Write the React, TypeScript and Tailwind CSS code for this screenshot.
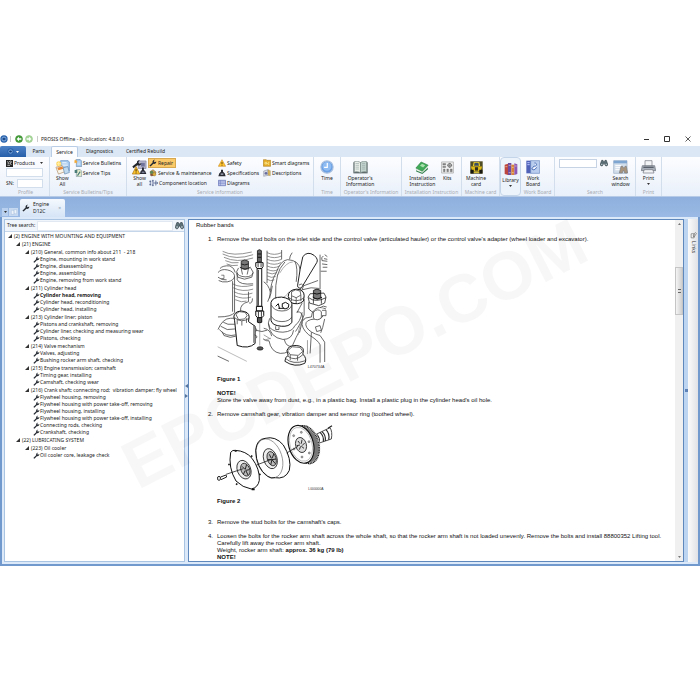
import React from 'react';

interface IconProps {
  className?: string;
}

interface TreeNode {
  level: number;
  label: string;
  leaf?: boolean;
  active?: boolean;
}

const treeNodes: TreeNode[] = [
  { level: 0, label: '(2) ENGINE WITH MOUNTING AND EQUIPMENT' },
  { level: 1, label: '(21) ENGINE' },
  { level: 2, label: '(210) General, common info about 211  - 218' },
  { level: 3, label: 'Engine, mounting in work stand', leaf: true },
  { level: 3, label: 'Engine, disassembling', leaf: true },
  { level: 3, label: 'Engine, assembling', leaf: true },
  { level: 3, label: 'Engine, removing from work stand', leaf: true },
  { level: 2, label: '(211) Cylinder head' },
  { level: 3, label: 'Cylinder head, removing', leaf: true, active: true },
  { level: 3, label: 'Cylinder head, reconditioning', leaf: true },
  { level: 3, label: 'Cylinder head, installing', leaf: true },
  { level: 2, label: '(213) Cylinder liner; piston' },
  { level: 3, label: 'Pistons and crankshaft, removing', leaf: true },
  { level: 3, label: 'Cylinder liner, checking and measuring wear', leaf: true },
  { level: 3, label: 'Pistons, checking', leaf: true },
  { level: 2, label: '(214) Valve mechanism' },
  { level: 3, label: 'Valves, adjusting', leaf: true },
  { level: 3, label: 'Bushing rocker arm shaft, checking', leaf: true },
  { level: 2, label: '(215) Engine transmission; camshaft' },
  { level: 3, label: 'Timing gear, installing', leaf: true },
  { level: 3, label: 'Camshaft, checking wear', leaf: true },
  { level: 2, label: '(216) Crank shaft; connecting rod;  vibration damper; fly wheel' },
  { level: 3, label: 'Flywheel housing, removing', leaf: true },
  { level: 3, label: 'Flywheel housing with power take-off, removing', leaf: true },
  { level: 3, label: 'Flywheel housing, installing', leaf: true },
  { level: 3, label: 'Flywheel housing with power take-off, installing', leaf: true },
  { level: 3, label: 'Connecting rods, checking', leaf: true },
  { level: 3, label: 'Crankshaft, checking', leaf: true },
  { level: 1, label: '(22) LUBRICATING SYSTEM' },
  { level: 2, label: '(223) Oil cooler' },
  { level: 3, label: 'Oil cooler core, leakage check', leaf: true },
];

const indents = ['pl-[3px]', 'pl-[11px]', 'pl-[20px]', 'pl-[28px]'];

/* ---------- icons ---------- */

function WrenchIcon({ className = 'size-[7px]' }: IconProps) {
  return (
    <svg viewBox="0 0 20 20" className={`${className} shrink-0`} aria-hidden="true">
      <path d="M1 17 L9 9 C8 5 11 1 15 2 L12 5 L14 8 L18 6 C19 10 15 13 11 12 L4 19 Z" fill="#262b33" />
    </svg>
  );
}

function BinocularsIcon({ className = 'size-[8px]' }: IconProps) {
  return (
    <svg viewBox="0 0 24 24" className={`${className} shrink-0`} aria-hidden="true">
      <path d="M5 4h4l2 4h2l2-4h4l4 11a4 4 0 0 1-8 3l-2-5h-2l-2 5a4 4 0 0 1-8-3Z" fill="#5c7078" stroke="#27343b" strokeWidth="1.5" />
      <circle cx="5.5" cy="16" r="2" fill="#dbe7ea" />
      <circle cx="18.5" cy="16" r="2" fill="#dbe7ea" />
    </svg>
  );
}

function LogoIcon({ className = 'size-[8px]' }: IconProps) {
  return (
    <svg viewBox="0 0 24 24" className={`${className} shrink-0`} aria-hidden="true">
      <circle cx="12" cy="12" r="11" fill="#2a63ad" />
      <circle cx="12" cy="12" r="6" fill="none" stroke="#a8c9ee" strokeWidth="2" />
      <path d="M8 12h8" stroke="#173f7c" strokeWidth="4" />
    </svg>
  );
}

function ArrowCircle({ className = 'size-[8px]', flip }: IconProps & { flip?: boolean }) {
  return (
    <svg viewBox="0 0 24 24" className={`${className} shrink-0`} aria-hidden="true">
      <circle cx="12" cy="12" r="10.5" fill={flip ? '#a9d99c' : '#47a33a'} stroke={flip ? '#8cc081' : '#2c7b25'} strokeWidth="1.5" />
      <path d={flip ? 'M5 10h7V5l7 7-7 7v-5H5Z' : 'M19 10h-7V5l-7 7 7 7v-5h7Z'} fill="#fff" />
    </svg>
  );
}

function ProductsIcon() {
  return (
    <svg viewBox="0 0 21 21" className="size-[7px] shrink-0" aria-hidden="true">
      <path d="M0 0h21v21H0Z" fill="#252525" />
      <path d="M3 5l5 2 5-4 4 3-5 3 4 6M4 16h8M5 11h5" stroke="#fff" strokeWidth="2" fill="none" />
    </svg>
  );
}

function BulletinsIcon({ className = 'size-[15px]' }: IconProps) {
  return (
    <svg viewBox="0 0 48 48" className={`${className} shrink-0`} aria-hidden="true">
      <path d="M18 2h24l4 5v28H18Z" fill="#a8cbef" stroke="#5688bf" strokeWidth="2" />
      <path d="M23 8h14M23 13h18M23 18h18" stroke="#fff" strokeWidth="2" />
      <path d="M3 23l20-5 10 19-22 8Z" fill="#f9f4e8" stroke="#a9845b" strokeWidth="2" />
      <path d="M7 25l16-4 4 7-16 5Z" fill="#e98937" />
      <path d="M26 25l15-4 5 19-15 5Z" fill="#bfd9ee" stroke="#5d83a8" strokeWidth="2" />
      <circle cx="12" cy="12" r="8" fill="#ffd65a" />
      <path d="M12 5v14M5 12h14" stroke="#fff0b1" strokeWidth="3" />
    </svg>
  );
}

function PageIcon({ tip }: { tip?: boolean }) {
  return (
    <svg viewBox="0 0 24 24" className="size-[8px] shrink-0" aria-hidden="true">
      <path d="M7 1h11l5 5v17H7Z" fill={tip ? '#e0e8c4' : '#9fc5ed'} stroke="#637e99" strokeWidth="1.5" />
      <path d="M10 9h9M10 13h9M10 17h9" stroke="#fff" strokeWidth="1.5" />
      {tip ? (
        <path d="M2 3h8v9H2Zm7 16l8-12 3 2-8 12Z" fill="#4c7d78" />
      ) : (
        <path d="M5 1l2 4 4 1-3 3 1 5-4-3-4 2 1-5-2-3 4-1Z" fill="#f4a936" />
      )}
    </svg>
  );
}

function ShowAllIcon() {
  return (
    <svg viewBox="0 0 48 48" className="size-[15px] shrink-0" aria-hidden="true">
      <path d="M20 3h25v24H20Z" fill="#b9b8cd" stroke="#77779d" strokeWidth="2" />
      <path d="M29 9h12v12H29Z" fill="#71739c" />
      <path d="M1 21l15-12c-1-6 3-9 9-8l-5 6 3 5 7-2c-1 7-7 9-13 7L5 26Z" fill="#20242b" />
      <path d="M13 21l12 24H1Z" fill="#fbc42e" stroke="#a66b09" strokeWidth="2" />
      <path d="M13 29v8m0 3v3" stroke="#322100" strokeWidth="3" />
      <path d="M32 24h6v8l4 3 4 10H25l3-10 4-3Z" fill="#262733" />
      <path d="M31 37h9v5h-9Z" fill="#787e96" />
    </svg>
  );
}

function MaintenanceIcon() {
  return (
    <svg viewBox="0 0 24 24" className="size-[8px] shrink-0" aria-hidden="true">
      <path d="M3 8l9-6 9 7-3 9-12 3Z" fill="#caa154" stroke="#735d38" strokeWidth="1.5" />
      <circle cx="8" cy="10" r="5" fill="#5c8658" />
      <circle cx="16" cy="16" r="5" fill="#ddb13f" stroke="#775c18" />
      <path d="M2 18l8-4 2 7Z" fill="#7b3f37" />
    </svg>
  );
}

function ComponentIcon() {
  return (
    <svg viewBox="0 0 28 24" className="h-[8px] w-[9px] shrink-0" aria-hidden="true">
      <path d="M4 4v16M1 7h6M1 17h6M12 2v20M9 5h6M9 19h6M21 4v16M14 12h13M24 8l3 4-3 4" stroke="#394b7b" strokeWidth="2" fill="none" />
      <circle cx="12" cy="12" r="3" fill="#d7d9ea" stroke="#394b7b" />
    </svg>
  );
}

function SafetyIcon() {
  return (
    <svg viewBox="0 0 24 24" className="size-[8px] shrink-0" aria-hidden="true">
      <path d="M12 2l11 20H1Z" fill="#ffc52f" stroke="#c27a0c" strokeWidth="1.5" />
      <path d="M12 9v7m0 2v2" stroke="#3c2500" strokeWidth="2.4" />
    </svg>
  );
}

function SpecIcon() {
  return (
    <svg viewBox="0 0 24 24" className="size-[8px] shrink-0" aria-hidden="true">
      <path d="M9 2h6v6l5 5 3 9H1l3-9 5-5Z" fill="#292c33" />
      <path d="M8 13h8v5H8Z" fill="#8d93a0" />
    </svg>
  );
}

function DiagramIcon() {
  return (
    <svg viewBox="0 0 24 24" className="size-[8px] shrink-0" aria-hidden="true">
      <path d="M1 4h22v16H1Z" fill="#c5cdf0" stroke="#5665ae" strokeWidth="2" />
      <path d="M1 9h22M1 14h22M7 4v16" stroke="#6474bb" strokeWidth="1.5" />
    </svg>
  );
}

function SmartIcon() {
  return (
    <svg viewBox="0 0 24 24" className="size-[8px] shrink-0" aria-hidden="true">
      <path d="M1 2h9l2 2h11v18H1Z" fill="#e5ad28" stroke="#9c6f11" strokeWidth="1.5" />
      <path d="M6 10h5v5H6Zm9 0h4M11 14h6v4" stroke="#fff1a5" strokeWidth="2" fill="none" />
    </svg>
  );
}

function DescriptionsIcon() {
  return (
    <svg viewBox="0 0 24 24" className="size-[8px] shrink-0" aria-hidden="true">
      <path d="M2 6l13-4v17L2 22Z" fill="#d4d6df" stroke="#858a9b" strokeWidth="1.5" />
      <path d="M15 2l7 3v15l-7-1Z" fill="#d9b65e" stroke="#8c7b50" />
      <circle cx="9" cy="13" r="4" fill="#676ca0" />
    </svg>
  );
}

function ClockIcon() {
  return (
    <svg viewBox="0 0 48 48" className="size-[14px] shrink-0" aria-hidden="true">
      <circle cx="24" cy="24" r="21" fill="#6ba0e4" stroke="#a8bfdf" strokeWidth="4" />
      <circle cx="24" cy="22" r="15" fill="#8fbdf3" />
      <path d="M25 10v15H14" stroke="#fff" strokeWidth="4" fill="none" />
    </svg>
  );
}

function BookIcon() {
  return (
    <svg viewBox="0 0 48 42" className="h-[13px] w-[15px] shrink-0" aria-hidden="true">
      <path d="M1 4h46v36H1Z" fill="#5d6869" />
      <path d="M4 2c8-2 15-1 20 3v33c-6-4-13-4-20-2Z" fill="#e9eee9" stroke="#778583" strokeWidth="2" />
      <path d="M44 2c-8-2-15-1-20 3v33c6-4 13-4 20-2Z" fill="#c3d3ce" stroke="#778583" strokeWidth="2" />
      <path d="M8 8h11M8 14h11M8 20h11M8 26h11M29 8h10M29 14h10M29 20h10M29 26h10" stroke="#96a5a2" strokeWidth="2" />
    </svg>
  );
}

function GreenBookIcon() {
  return (
    <svg viewBox="0 0 48 44" className="h-[13px] w-[14px] shrink-0" aria-hidden="true">
      <path d="M4 29l20 9 20-17v8L25 44 4 36Z" fill="#398355" />
      <path d="M5 27l19 9 20-18v4L25 40 5 32Z" fill="#edf4e8" />
      <path d="M3 24L21 3l24 11-20 21Z" fill="#3fab58" stroke="#287a3d" strokeWidth="2" />
      <path d="M17 16l7-7 11 5-7 8Z" fill="#a9dfac" />
    </svg>
  );
}

function KitsIcon() {
  return (
    <svg viewBox="0 0 42 42" className="size-[13px] shrink-0" aria-hidden="true">
      <path d="M2 3h38v36H2Z" fill="#f1f1f1" stroke="#999" strokeWidth="2" />
      <path d="M6 8h9v5H6Zm0 9h9v4H6Zm2 9h5v9H8Zm11 0h5v9h-5Zm11 0h6v9h-6Z" fill="#888" stroke="#555" />
      <circle cx="28" cy="14" r="6" fill="none" stroke="#666" strokeWidth="3" />
      <path d="M20 14h16M28 6v16" stroke="#666" strokeWidth="2" />
    </svg>
  );
}

function MachineIcon() {
  return (
    <svg viewBox="0 0 42 42" className="size-[13px] shrink-0" aria-hidden="true">
      <path d="M1 1h40v40H1Z" fill="#514d25" />
      <path d="M12 3h18l3 14H9Z" fill="#f1d022" />
      <path d="M15 6h12l2 9H13Z" fill="#3a4f66" />
      <path d="M3 18h36l-4 14H7Z" fill="#e0bb16" />
      <path d="M16 20h10v11H16Z" fill="#322f1d" />
      <path d="M2 28h10v12H2Zm28 0h10v12H30Z" fill="#17170f" />
      <path d="M12 34h18v4H12Z" fill="#f5db40" />
    </svg>
  );
}

function LibraryIcon() {
  return (
    <svg viewBox="0 0 42 42" className="size-[14px] shrink-0" aria-hidden="true">
      <path d="M2 8l10-3v34L2 36Z" fill="#bd473e" />
      <path d="M12 3h10v36H12Z" fill="#6e4aa1" />
      <path d="M22 8h9v31h-9Z" fill="#d78138" />
      <path d="M31 4l9 3v29l-9 3Z" fill="#8d58b3" />
      <path d="M4 14h6M14 10h6M24 16h5M33 12h5M14 32h6M24 32h5" stroke="#f4dba8" strokeWidth="2" />
    </svg>
  );
}

function WorkBoardIcon() {
  return (
    <svg viewBox="0 0 42 42" className="size-[14px] shrink-0" aria-hidden="true">
      <path d="M1 2h14v38H1Z" fill="#5061b8" />
      <path d="M14 2h27v38H14Z" fill="#b9cdee" stroke="#6886c0" strokeWidth="2" />
      <path d="M4 8h7M4 14h7" stroke="#b9c6ff" strokeWidth="3" />
      <path d="M25 9a5 5 0 1 1-1 9l-7 9 7 3 9-8" stroke="#5576b9" strokeWidth="3" fill="#eef3ff" />
    </svg>
  );
}

function SearchWindowIcon() {
  return (
    <svg viewBox="0 0 45 45" className="size-[15px] shrink-0" aria-hidden="true">
      <path d="M2 2h40v38H2Z" fill="#d3deeb" stroke="#9aaec4" strokeWidth="2" />
      <path d="M2 2h40v8H2Z" fill="#7fa5d1" />
      <path d="M7 17h18M7 23h16M7 29h18" stroke="#fff" strokeWidth="3" />
      <path d="M24 19h5l2 4h3l2-4h4l4 20h-9l-2-7h-3l-2 7h-9Z" fill="#a8937d" stroke="#7b7f83" strokeWidth="2" />
    </svg>
  );
}

function PrinterIcon() {
  return (
    <svg viewBox="0 0 45 42" className="h-[14px] w-[15px] shrink-0" aria-hidden="true">
      <path d="M12 2h21v17H12Z" fill="#f3f4f6" stroke="#70747b" strokeWidth="2" />
      <path d="M4 17h37l3 15H1Z" fill="#a9afb8" stroke="#666c76" strokeWidth="2" />
      <path d="M7 20h31v4H7Z" fill="#5a606b" />
      <path d="M10 29h25l4 10H6Z" fill="#f3f4f6" stroke="#70747b" strokeWidth="2" />
    </svg>
  );
}

/* ---------- ribbon ---------- */

function RibbonGroup({ title, width, children }: { title: string; width: string; children: React.ReactNode }) {
  return (
    <section aria-label={title} className={`${width} flex shrink-0 flex-col border-r border-[#d3deec] pt-px`}>
      <div className="flex h-[30px] justify-center">{children}</div>
      <div className="flex justify-center whitespace-nowrap leading-[8px] text-[#a7abb2]">{title}</div>
    </section>
  );
}

function BigButton({ icon, label, caret }: { icon: React.ReactNode; label: string; caret?: boolean }) {
  return (
    <button type="button" className="flex flex-col items-center px-px pt-px">
      <span className="flex h-[16px] items-center">{icon}</span>
      <span className="whitespace-pre text-center leading-[6px]">{label}</span>
      {caret && <Caret />}
    </button>
  );
}

function SmallButton({ icon, label, active }: { icon: React.ReactNode; label: string; active?: boolean }) {
  return (
    <button
      type="button"
      className={`flex h-[10px] items-center gap-px whitespace-nowrap border ${
        active ? 'border-[#d8a851] bg-[#fbc968] pr-[2px]' : 'border-transparent'
      }`}
    >
      {icon}
      {label}
    </button>
  );
}

function Caret() {
  return (
    <svg viewBox="0 0 6 4" className="my-[2px] h-[2px] w-[3px]" aria-hidden="true">
      <path d="M0 0h6L3 4Z" fill="#333" />
    </svg>
  );
}

function Ribbon() {
  return (
    <div className="flex h-[40px] overflow-hidden border-b border-[#b5cae6] bg-linear-to-b from-[#fcfdff] to-[#e9f0fa] pl-[2px]">
      <RibbonGroup title="Profile" width="w-[48px]">
        <div className="flex w-full flex-col pl-[4px]">
          <button type="button" className="flex h-[10px] items-center gap-px">
            <ProductsIcon />
            Products
            <span className="ml-[4px]"><Caret /></span>
          </button>
          <input aria-label="Product" className="h-[9px] w-[37px] border border-[#d3deed] bg-white" />
          <label className="mt-[2px] flex items-center gap-[3px]">
            SN:
            <input className="h-[9px] w-[26px] border border-[#d3deed] bg-white" />
          </label>
        </div>
      </RibbonGroup>
      <RibbonGroup title="Service Bulletins/Tips" width="w-[77px]">
        <BigButton icon={<BulletinsIcon />} label={'Show\nAll'} />
        <div className="ml-[2px] flex flex-col">
          <SmallButton icon={<PageIcon />} label="Service Bulletins" />
          <SmallButton icon={<PageIcon tip />} label="Service Tips" />
        </div>
      </RibbonGroup>
      <RibbonGroup title="Service information" width="w-[187px]">
        <div className="flex w-full pl-[4px]">
          <BigButton icon={<ShowAllIcon />} label={'Show\nall'} />
          <div className="flex w-[69px] flex-col items-start">
            <SmallButton icon={<WrenchIcon className="size-[8px]" />} label="Repair" active />
            <SmallButton icon={<MaintenanceIcon />} label="Service & maintenance" />
            <SmallButton icon={<ComponentIcon />} label="Component location" />
          </div>
          <div className="flex w-[45px] flex-col items-start">
            <SmallButton icon={<SafetyIcon />} label="Safety" />
            <SmallButton icon={<SpecIcon />} label="Specifications" />
            <SmallButton icon={<DiagramIcon />} label="Diagrams" />
          </div>
          <div className="flex flex-col items-start">
            <SmallButton icon={<SmartIcon />} label="Smart diagrams" />
            <SmallButton icon={<DescriptionsIcon />} label="Descriptions" />
          </div>
        </div>
      </RibbonGroup>
      <RibbonGroup title="Time" width="w-[27px]">
        <BigButton icon={<ClockIcon />} label="Time" />
      </RibbonGroup>
      <RibbonGroup title="Operator's Information" width="w-[61px]">
        <div className="flex w-full pl-[4px]">
          <BigButton icon={<BookIcon />} label={"Operator's\nInformation"} />
        </div>
      </RibbonGroup>
      <RibbonGroup title="Installation Instruction" width="w-[60px]">
        <div className="flex gap-[3px]">
          <BigButton icon={<GreenBookIcon />} label={'Installation\nInstruction'} />
          <BigButton icon={<KitsIcon />} label="Kits" />
        </div>
      </RibbonGroup>
      <RibbonGroup title="Machine card" width="w-[38px]">
        <div className="flex w-full pl-[3px]">
          <BigButton icon={<MachineIcon />} label={'Machine\ncard'} />
        </div>
      </RibbonGroup>
      <div className="w-[21px] shrink-0 rounded-sm border border-[#c5d5e9] bg-[#edf3fb]">
        <div className="flex justify-center pt-[2px]">
          <BigButton icon={<LibraryIcon />} label="Library" caret />
        </div>
      </div>
      <RibbonGroup title="Work Board" width="w-[34px]">
        <div className="flex w-full pl-[4px]">
          <BigButton icon={<WorkBoardIcon />} label={'Work\nBoard'} />
        </div>
      </RibbonGroup>
      <RibbonGroup title="Search" width="w-[81px]">
        <input aria-label="Search" className="mt-px h-[9px] w-[38px] border border-[#c6d3e5] bg-white" />
        <button type="button" aria-label="Find" className="ml-[3px] flex h-[10px] items-center">
          <BinocularsIcon />
        </button>
        <div className="ml-[2px]">
          <BigButton icon={<SearchWindowIcon />} label={'Search\nwindow'} />
        </div>
      </RibbonGroup>
      <RibbonGroup title="Print" width="w-[26px]">
        <BigButton icon={<PrinterIcon />} label="Print" caret />
      </RibbonGroup>
    </div>
  );
}

/* ---------- figures ---------- */

function StudBoltFigure() {
  return (
    <svg viewBox="95 102 335 360" className="h-[120px] w-[111px]" role="img" aria-label="Stud bolts and control valve">
      <g fill="none" stroke="#444" strokeWidth="2.4" strokeLinejoin="round">
        {/* springs */}
        <path d="M112 108q30 16 88 2M112 116q40 20 92 2M116 126q38 18 88 2M120 136q20 10 40 6M124 146q16 8 34 4M142 206q24 14 62 4M144 218q28 14 60 4M146 230q28 14 56 4M148 242q24 12 50 4M150 254q20 10 34 4" stroke="#777" />
        <path d="M246 112q22 10 44 0M246 122q22 10 44 0M246 132q22 10 44 0M246 142q22 10 42 0M246 152q20 10 38 0M246 162q20 10 34 0M246 172q16 8 30 0M246 182q14 8 26 2M246 192q10 8 22 2" stroke="#777" />
        <path d="M246 106v98M290 104v28M236 200q14 8 20 30" />
        {/* left cylinder */}
        <path d="M98 172q10-12 28-8q20 4 22 18q0 14-22 18q-16 2-26-4M98 186q12 10 26 8M148 184v108q-8 14-50 14M142 198v92M104 160q8-10 30-8q14 6 16 20" />
        <path d="M108 180h8v10h-8" strokeWidth="2" />
        {/* upper left nut */}
        <path d="M160 158l-6 12q4 14 26 15q22 0 24-14l-8-14M156 172v22q8 16 48 12M154 174l4 12 20 6 22-6 4-14M168 160l4 18M190 160l-4 18" fill="#fff" />
        <path d="M168 138q10-8 22 0v20q-10 8-22 0Z" fill="#777" stroke="#222" />
        <path d="M164 156q16 12 32 0M168 146q10 6 22 0" stroke="#222" strokeWidth="3" />
        {/* casting outline */}
        <path d="M254 250q2-50 20-78q12-36 34-39q36 2 38 32q6 24 1 62M262 212q-2 24-14 48M278 178q-8 30-6 72M330 138q10 20 4 62M300 140q-18 20-22 40" />
        <path d="M284 174q20-34 40-34M286 250q20-6 26-20" stroke="#999" />
        {/* plunger */}
        <path d="M354 124q14-18 34-4q14 12 8 22l-46 76q-10 4-12-6l8-50Z" fill="#fff" stroke="#222" strokeWidth="3" />
        <path d="M342 210q8-8 14 2l-4 12M322 112q-8 10-8 20M400 196q-16 6-44 16M352 224q28-10 52-4" />
        {/* right edge pieces */}
        <path d="M406 118v104M416 122q-8 4-4 14l16 2M412 146l16 2M414 156h14M408 168h18M420 118l8 6M418 130l10 2" stroke="#444" />
        <path d="M370 246l6-10 42-2 6 12-4 18-18 8-28-8ZM372 248q20 16 52 0M372 262v20q18 18 34 12M386 250v16M410 250v16" fill="#fff" stroke="#222" />
        <path d="M386 226q10-8 22 0v22q-10 8-22 0Z" fill="#777" stroke="#111" />
        <path d="M384 246q14 12 28 0M386 234q10 6 22 0" stroke="#111" strokeWidth="3" />
        {/* bolt beside the valve */}
        <path d="M310 244q0-20 26-22q22 2 22 20l-2 16q-16 14-40 4Z" fill="#fff" stroke="#111" strokeWidth="3" />
        <path d="M320 230l12-6 14 4 2 12-14 8-14-6ZM312 248q22 18 46 0M320 242v16M334 248v16M348 240v18M352 264l-16 30M358 252v48q-16 36-26 50" />
        {/* control valve */}
        <path d="M258 262q4-16 32-16q28 4 31 20v56q-8 14-32 12q-28-2-31-18Z" fill="#fff" stroke="#111" strokeWidth="3" />
        <path d="M259 270q8 18 32 18q24 0 30-18M259 304q8 16 32 16q22 0 30-14" />
        <path d="M272 274l8-8 4 16M292 266l10-4 10 6-2 10-10 4-8-6ZM280 280h18" stroke="#111" strokeWidth="3" />
        <path d="M254 310q-8 14 0 28q14 14 40 14q30-2 36-20q16-10 22-40M250 326q4 42 44 48q28 0 32-28M298 374q6 24 24 20q12-28 22-46M336 290q18 0 18 20l-10 44" />
        <path d="M272 334v10h10v-8" fill="#fff" />
        {/* centre stud bolt */}
        <path d="M217 106q6-6 12 0v34h-12Z" fill="#666" stroke="#111" />
        <path d="M212 142h22v12l-4 6h-14l-4-6ZM216 160h14v114h-14ZM214 274h18v14h-18ZM212 288h24v14l-5 6h-14l-5-6Z" fill="#fff" stroke="#111" strokeWidth="3" />
        <path d="M219 144v12M228 144v12M220 164v108M220 290v16M229 290v16" stroke="#111" />
        <path d="M217 308h13v14q-6 4-13 0ZM218 116h10M218 126h10" fill="#555" stroke="#111" strokeWidth="3" />
        <path d="M224 326v66" stroke="#999" />
        <ellipse cx="225" cy="401" rx="9" ry="5" fill="#555" stroke="#222" />
        {/* lower left bolt */}
        <path d="M146 306q0-16 22-18q24 2 24 18l-2 14 20 14v52q-20 18-54 6l-8-76Z" fill="#fff" stroke="#111" strokeWidth="3" />
        <path d="M152 298l10-8 18 2 6 10-8 10-18 2ZM148 308q20 18 44 2M156 314v14M170 318v14M184 310v14M206 332v52M166 288q-2-22 24-28v-30M192 264q10 2 10-14" />
        <path d="M98 344q14-34 38-34h12M102 344q20 24 50 16M106 334l20 10 26-2M114 322l14 6h22M110 350l6 12q20 10 36 2" />
        <path d="M210 338q8 6 2 12M208 360q12 4 6 10M236 340q20 4 24 24M234 372q10 8 18 6q6 34 34 38q30 0 26-18M212 346q20 8 34 0" />
        <path d="M238 376l20-6M236 360l20 12" stroke="#888" />
        {/* bottom bolt */}
        <path d="M300 440q0-14 10-18l-4-14q4-16 28-16q22 2 22 16l-2 10q14 14 6 28q-30 14-60-6Z" fill="#fff" stroke="#222" strokeWidth="3" />
        <path d="M308 408l14-12 24 2 8 12-14 12-24-2ZM308 424q24 18 46-4M316 420v16M338 424v14M300 430q24 22 62 8" />
        {/* hoses */}
        <path d="M424 282q-20-10-34 2q-10 8-10 22q-20 0-28 12q-4 22 20 42q28 16 34 30v54M416 300q-6 16-24 12l-14 2q-22 6-12 24q10 16 40 24l14 20v60" />
        <path d="M386 292q12-14 24-2v18q-12 12-24 2ZM412 286h12v16h-12M392 336l14-4 4 14-14 4ZM426 276q-10-6-20 2M380 352l-4 64M420 312q-6 30-12 42" fill="#fff" />
        <path d="M360 310q-18 20-20 50M368 376v42" stroke="#888" />
        <path d="M97 396l88 44" stroke="#aaa" />
        <path d="M97 424l34 16" />
      </g>
      <text x="369" y="459" fontSize="11" fill="#333" fontFamily="Liberation Sans, sans-serif">L470734A</text>
    </svg>
  );
}

function CamshaftFigure() {
  return (
    <svg viewBox="95 100 351 207" className="h-[69px] w-[117px]" role="img" aria-label="Camshaft gear and vibration damper">
      <g fill="none" stroke="#222" strokeWidth="2.4">
        {/* shaft */}
        <path d="M388 136l46-22q8 12 4 34l-42 14Z" fill="#fff" />
        <path d="M394 134q10 10 8 24M404 128q12 10 10 28M410 126q12 10 10 28M422 120q12 12 8 30M428 116l12-8" strokeWidth="3.5" />
        {/* gear */}
        <ellipse cx="362" cy="165" rx="38" ry="58" fill="#777" stroke="#111" strokeWidth="4" transform="rotate(-16 362 165)" />
        <ellipse cx="364" cy="165" rx="37" ry="56" stroke="#ddd" strokeWidth="7" strokeDasharray="2 3" transform="rotate(-16 364 165)" />
        <ellipse cx="347" cy="164" rx="37" ry="58" fill="#fff" stroke="#111" strokeWidth="3.5" transform="rotate(-16 347 164)" />
        <ellipse cx="347" cy="164" rx="33" ry="52" stroke="#888" strokeWidth="1.5" transform="rotate(-16 347 164)" />
        <ellipse cx="347" cy="166" rx="16" ry="23" fill="#ddd" transform="rotate(-16 347 166)" />
        <path d="M338 154l6 8M350 150l-2 12M358 160l-8 8M356 176l-8-6M342 180l4-10M334 168l10-2" stroke="#333" strokeWidth="3" />
        <g fill="#aaa" stroke="#555" strokeWidth="1.5">
          <circle cx="325" cy="138" r="3" />
          <circle cx="348" cy="128" r="3" />
          <circle cx="371" cy="156" r="3" />
          <circle cx="372" cy="190" r="3" />
          <circle cx="350" cy="202" r="3" />
          <circle cx="326" cy="178" r="3" />
        </g>
        {/* damper */}
        <path d="M240 146q30-8 54 20q26 42 18 76q-12 28-44 22Z" fill="#fff" stroke="#111" strokeWidth="3" />
        <ellipse cx="252" cy="206" rx="38" ry="60" fill="#fff" stroke="#777" strokeWidth="2" transform="rotate(-18 252 206)" />
        <path d="M240 146q-26 2-29 36q2 54 36 78q10 8 22 4" stroke="#111" strokeWidth="3" />
        <ellipse cx="255" cy="207" rx="20" ry="31" fill="#eee" transform="rotate(-18 255 207)" />
        <ellipse cx="259" cy="207" rx="13" ry="22" fill="#bbb" transform="rotate(-18 259 207)" />
        <path d="M252 194l6 12M266 192l-6 14M272 208l-12 2M270 222l-10-12M256 226l4-16M248 210h12" stroke="#222" strokeWidth="3" />
        {/* sensor ring */}
        <path d="M136 188q6-8 14-6q32 2 50 24q24 32 22 66q-4 22-24 26q-26-4-46-24q-24-40-16-86Z" fill="#fff" stroke="#111" strokeWidth="3" />
        <path d="M148 184h6M131 222v5M152 282l4 3M199 299h9M222 256l3-4M197 198l4 3" stroke="#111" strokeWidth="5" />
        <ellipse cx="176" cy="240" rx="20" ry="29" fill="#eee" transform="rotate(-22 176 240)" />
        <ellipse cx="180" cy="240" rx="13" ry="20" fill="#bbb" transform="rotate(-22 180 240)" />
        <path d="M170 230l10 10M184 224l-4 14M192 240l-10 2M188 256l-6-12M174 254l6-12" stroke="#222" strokeWidth="3" />
        {/* bolt and centre line */}
        <path d="M122 254l52-17M214 226l44-17M304 190l34-20" />
        <path d="M97 262q4-4 8 0v8q-4 4-8 0ZM106 262l16-6 2 6-17 8" fill="#fff" stroke="#222" strokeWidth="3" />
      </g>
      <text x="369" y="301" fontSize="10" fill="#333" fontFamily="Liberation Sans, sans-serif">L000000A</text>
    </svg>
  );
}

/* ---------- panels ---------- */

function TreePanel() {
  return (
    <aside className="flex w-[181px] shrink-0 flex-col border border-[#a9c3e2] bg-white">
      <label className="flex h-[12px] shrink-0 items-center border-b border-[#c5d6ea] bg-[#f0f5fb] pl-[2px]">
        Tree search:
        <input className="mx-[2px] h-[10px] min-w-0 flex-1 border border-[#e1e8f1] bg-white" />
        <BinocularsIcon className="size-[9px]" />
      </label>
      <ul>
        {treeNodes.map((node) => (
          <li key={node.label} className={indents[node.level]}>
            <button
              type="button"
              className={`flex items-center whitespace-pre ${node.leaf ? 'h-[7px]' : 'h-[8px] gap-[2px]'} ${
                node.active ? 'font-bold' : ''
              }`}
            >
              {node.leaf ? (
                <WrenchIcon />
              ) : (
                <svg viewBox="0 0 8 8" className="size-[4px] shrink-0" aria-hidden="true">
                  <path d="M8 0v8H0Z" fill="#333" />
                </svg>
              )}
              {node.label}
            </button>
          </li>
        ))}
      </ul>
    </aside>
  );
}

function Step({ no, className = '', children }: { no: number; className?: string; children: React.ReactNode }) {
  return (
    <div className={`flex ${className}`}>
      <span className="w-[9px] shrink-0">{no}.</span>
      <div className="min-w-0 flex-1">{children}</div>
    </div>
  );
}

function DocumentPanel() {
  return (
    <main className="flex min-w-0 flex-1 border border-[#5f88bd] bg-white">
      <article className="min-w-0 flex-1 pl-[7px] pt-[2px] font-['Liberation_Sans',Arial,sans-serif] text-[6px] leading-[7px] text-[#111]">
        <p>Rubber bands</p>
        <div className="pl-[12px] pt-[7px]">
          <Step no={1}>
            <p>
              Remove the stud bolts on the inlet side and the control valve (articulated hauler) or the control valve's adapter (wheel
              loader and excavator).
            </p>
            <div className="mt-[6px]"><StudBoltFigure /></div>
            <p className="mt-[7px] font-bold">Figure 1</p>
            <p className="mt-[7px] font-bold">NOTE!</p>
            <p>Store the valve away from dust, e.g., in a plastic bag. Install a plastic plug in the cylinder head's oil hole.</p>
          </Step>
          <Step no={2} className="mt-[7px]">
            <p>Remove camshaft gear, vibration damper and sensor ring (toothed wheel).</p>
            <div className="mt-[5px]"><CamshaftFigure /></div>
            <p className="mt-[6px] font-bold">Figure 2</p>
          </Step>
          <Step no={3} className="mt-[14px]">
            <p>Remove the stud bolts for the camshaft's caps.</p>
          </Step>
          <Step no={4} className="mt-[7px]">
            <p>
              Loosen the bolts for the rocker arm shaft across the whole shaft, so that the rocker arm shaft is not loaded unevenly.
              Remove the bolts and install 88800352 Lifting tool.
            </p>
            <p>Carefully lift away the rocker arm shaft.</p>
            <p>
              Weight, rocker arm shaft: <b>approx. 36 kg (79 lb)</b>
            </p>
            <p className="font-bold">NOTE!</p>
          </Step>
        </div>
      </article>
      <div className="flex w-[8px] shrink-0 flex-col items-center bg-[#f0f0f0]">
        <svg viewBox="0 0 6 4" className="mt-[3px] h-[2px] w-[3px]" aria-hidden="true">
          <path d="M0 4h6L3 0Z" fill="#777" />
        </svg>
        <div className="mt-[42px] flex h-[48px] w-full items-center justify-center border border-[#c5c5c5] bg-linear-to-r from-[#f5f5f5] to-[#cfcfcf]">
          <span className="h-[4px] w-[3px] border-y border-[#666]" />
        </div>
        <svg viewBox="0 0 6 4" className="mb-[3px] mt-auto h-[2px] w-[3px]" aria-hidden="true">
          <path d="M0 0h6L3 4Z" fill="#777" />
        </svg>
      </div>
    </main>
  );
}

export default function App() {
  return (
    <div className="min-h-screen bg-white pt-[132px] font-['Noto_Sans','Open_Sans',sans-serif] text-[5px] leading-[7px] text-[#222]">
      <header>
        <div className="flex h-[14px] items-center">
          <LogoIcon />
          <span className="ml-[2px] h-[6px] border-l border-[#ccc]" />
          <button type="button" aria-label="Back" className="ml-[4px]"><ArrowCircle /></button>
          <button type="button" aria-label="Forward" className="ml-[2px]"><ArrowCircle flip /></button>
          <span className="ml-[4px] h-[6px] border-l border-[#ccc]" />
          <h1 className="ml-[3px] flex-1">PROSIS Offline - Publication: 4.8.0.0</h1>
          <div className="flex gap-[15px] pr-[9px] text-[#333]">
            <button type="button" aria-label="Minimize">
              <svg viewBox="0 0 6 6" className="size-[6px]"><path d="M1 3.500h5" stroke="currentColor" /></svg>
            </button>
            <button type="button" aria-label="Maximize">
              <svg viewBox="0 0 6 6" className="size-[6px]"><path d="M.5.5h5v5h-5Z" fill="none" stroke="currentColor" /></svg>
            </button>
            <button type="button" aria-label="Close">
              <svg viewBox="0 0 6 6" className="size-[6px]"><path d="M.5.5l5 5M5.500.5l-5 5" stroke="currentColor" strokeWidth=".8" /></svg>
            </button>
          </div>
        </div>
        <nav className="flex h-[11px] bg-[#dce7f5]">
          <button type="button" aria-label="Application menu" className="flex w-[26px] items-center justify-center gap-[2px] rounded-t-xs bg-linear-to-b from-[#4c82c6] to-[#275fa9]">
            <LogoIcon className="size-[7px]" />
            <svg viewBox="0 0 6 4" className="h-[2px] w-[3px]" aria-hidden="true"><path d="M0 0h6L3 4Z" fill="#fff" /></svg>
          </button>
          <button type="button" className="w-[25px]">Parts</button>
          <button type="button" className="w-[27px] rounded-t-xs border border-b-0 border-[#b9cde7] bg-[#fcfdff]">Service</button>
          <button type="button" className="w-[43px]">Diagnostics</button>
          <button type="button" className="w-[49px]">Certified Rebuild</button>
        </nav>
        <Ribbon />
      </header>

      <div className="flex h-[20px] items-end bg-linear-to-b from-[#8eafdd] to-[#9bbae5] pl-[2px]">
        <button type="button" aria-label="Tab list" className="mb-px flex h-[8px] w-[6px] items-center justify-center bg-[#b9d0ee]"><Caret /></button>
        <button type="button" aria-label="New tab" className="mb-px ml-px flex h-[8px] w-[9px] items-center justify-center bg-[#c6d9f1]">
          <svg viewBox="0 0 18 18" className="size-[6px]" aria-hidden="true"><path d="M1 4h8v12H1ZM9 2h8v12H9Z" fill="#edf3fb" stroke="#8facd3" /></svg>
        </button>
        <div className="ml-[2px] flex h-[18px] w-[45px] items-center rounded-t-xs bg-linear-to-b from-[#f5f9fe] to-[#d5e4f6] pl-[2px]">
          <WrenchIcon className="size-[8px]" />
          <span className="ml-[3px] flex-1">Engine<br />D12C</span>
          <button type="button" aria-label="Close tab" className="mr-[4px] text-[#8799b0]">×</button>
        </div>
      </div>

      <div className="relative flex h-[349px] border-x-2 border-b-2 border-[#7199ce] bg-[#dce9f8] pb-[2px] pl-[2px] pt-[2px]">
        <TreePanel />
        <div className="flex w-[3px] shrink-0 flex-col items-center justify-center gap-[6px]">
          <svg viewBox="0 0 6 8" className="h-[4px] w-[3px]" aria-hidden="true"><path d="M6 0v8L0 4Z" fill="#55749d" /></svg>
          <svg viewBox="0 0 6 8" className="h-[4px] w-[3px]" aria-hidden="true"><path d="M0 0v8l6-4Z" fill="#55749d" /></svg>
        </div>
        <DocumentPanel />
        <div className="flex w-[4px] shrink-0 items-center justify-center bg-[#bed5f2]">
          <span className="size-[3px] bg-[#5d82b7]" />
        </div>
        <button type="button" className="flex w-[10px] shrink-0 items-center gap-[2px] bg-linear-to-r from-[#fbfbfb] to-[#dfe1e5] pt-[13px] text-[#333] [writing-mode:vertical-rl]">
          <svg viewBox="0 0 24 24" className="size-[7px]" aria-hidden="true">
            <path d="M4 6h10v14H4ZM10 14l8-12 4 3-8 12Z" fill="#fff" stroke="#555" strokeWidth="2" />
          </svg>
          Links
        </button>
        <div aria-hidden="true" className="pointer-events-none absolute inset-0 flex items-center justify-center pb-[76px] pl-[8px]">
          <span className="-rotate-27 font-['Liberation_Sans',Arial,sans-serif] text-[68px] font-bold leading-none text-black/3">
            EPCDEPO.COM
          </span>
        </div>
      </div>
    </div>
  );
}
